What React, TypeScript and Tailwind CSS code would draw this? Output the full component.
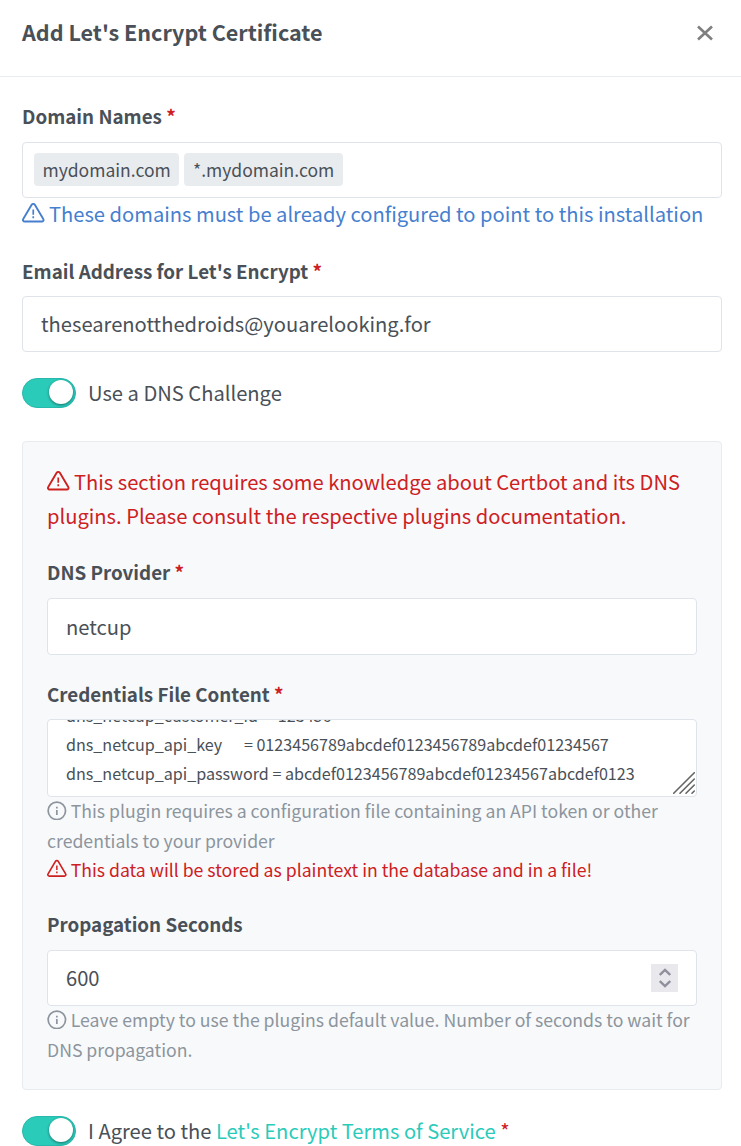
import type { ReactNode } from "react";

function AlertIcon({ className }: { className: string }) {
  return (
    <svg viewBox="0 0 24 24" fill="none" stroke="currentColor" strokeLinejoin="round" className={className}>
      <path
        strokeWidth="2"
        d="M10.29 2.9 1.3 18.2a1.7 1.7 0 0 0 1.5 2.6h18.4a1.7 1.7 0 0 0 1.5-2.6L13.71 2.9a2 2 0 0 0-3.42 0z"
      />
      <path strokeWidth="1.8" d="M12 8v5.5M12 15.3v2" />
    </svg>
  );
}

function InfoIcon({ className }: { className: string }) {
  return (
    <svg viewBox="0 0 24 24" fill="none" stroke="currentColor" className={className}>
      <circle cx="12" cy="12" r="10.6" strokeWidth="2.1" />
      <path strokeWidth="2.1" d="M12 17v-6M12 7v2" />
    </svg>
  );
}

function Label({ children, required = false }: { children: ReactNode; required?: boolean }) {
  return (
    <div className="h-[30px] whitespace-nowrap text-[18.8px] leading-[28px] font-bold">
      {children}
      {required && <span className="text-[#cd201f]"> *</span>}
    </div>
  );
}

function Field({ children, className = "h-14 px-[18px] text-[20.15px]" }: { children: ReactNode; className?: string }) {
  return (
    <div className={`flex items-center rounded-[4px] border border-[#dfe3ea] bg-white ${className}`}>
      {children}
    </div>
  );
}

function Toggle() {
  return (
    <span className="flex h-[30px] w-[54px] shrink-0 items-center justify-end rounded-full border border-[#28b9ac] bg-[#2bcbba] pr-[2px]">
      <span className="mb-[2px] size-[24px] rounded-full bg-white shadow-[0_1px_3px_rgba(0,0,0,0.45)]" />
    </span>
  );
}

export default function App() {
  return (
    <div className="h-[1146px] w-[741px] overflow-hidden bg-white font-['Noto_Sans_CJK_SC','Noto_Sans',sans-serif] text-[#495057]">
      <header className="flex h-[77px] items-start justify-between border-b border-[#e9ecef] pt-[16px] pr-[28px] pl-[22px]">
        <h1 className="text-[21.55px] leading-[32px] font-bold whitespace-nowrap">Add Let's Encrypt Certificate</h1>
        <svg viewBox="0 0 16 16" className="mt-[9px] size-[16px]" fill="none" stroke="#7f7f7f" strokeWidth="2.6">
          <path d="M1 1.5 15 14.5M15 1.5 1 14.5" />
        </svg>
      </header>

      <main className="pt-[25px] pr-[19px] pl-[22px]">
        <Label required>Domain Names</Label>
        <Field className="mt-[10px] h-14 gap-[5px] px-[11px] text-[17.5px]">
          <span className="mb-px h-[33px] w-[145px] rounded-[4px] bg-[#e9ecef] pl-[8.5px] leading-[33px]">
            mydomain.com
          </span>
          <span className="mb-px h-[33px] w-[159px] rounded-[4px] bg-[#e9ecef] pl-[9px] leading-[33px]">
            *.mydomain.com
          </span>
        </Field>
        <p className="h-[34px] text-[20.15px] leading-[31px] whitespace-nowrap text-[#467fcf]">
          <AlertIcon className="mr-[4.5px] mb-[6px] inline-block size-[22.5px]" />
          These domains must be already configured to point to this installation
        </p>

        <div className="mt-[25px]">
          <Label required>Email Address for Let's Encrypt</Label>
        </div>
        <Field className="mt-[9px] h-14 px-[18px] text-[20.15px]">thesearenotthedroids@youarelooking.for</Field>

        <div className="mt-[26px] flex h-[30px] items-center gap-[12px] text-[20.15px]">
          <Toggle />
          <span>Use a DNS Challenge</span>
        </div>

        <section className="mt-[33px] h-[649px] rounded-[4px] border border-[#e9ecef] bg-[#f8f9fb] px-[24px] pt-[23px]">
          <p className="h-[69px] text-[20.15px] leading-[34px] whitespace-nowrap text-[#cd201f]">
            <AlertIcon className="mr-[4.5px] mb-[6px] inline-block size-[22.5px]" />
            This section requires some knowledge about Certbot and its DNS
            <br />
            plugins. Please consult the respective plugins documentation.
          </p>

          <div className="mt-[24px]">
            <Label required>DNS Provider</Label>
          </div>
          <Field className="mt-[10px] h-[57px] px-[18px] pt-px text-[20.15px]">netcup</Field>

          <div className="mt-[25px]">
            <Label required>Credentials File Content</Label>
          </div>
          <div className="relative mt-[9px] flex h-[78px] flex-col justify-end overflow-hidden rounded-[4px] border border-[#dfe3ea] bg-white px-[18px] pb-[8px] text-[16.13px] leading-[29px] whitespace-pre">
            <div>dns_netcup_customer_id{"  "}= 123456</div>
            <div>dns_netcup_api_key{"      "}= 0123456789abcdef0123456789abcdef01234567</div>
            <div>dns_netcup_api_password = abcdef0123456789abcdef01234567abcdef0123</div>
            <svg
              viewBox="0 0 22 22"
              className="absolute right-px bottom-[2px] size-[22px]"
              stroke="#666"
              strokeWidth="1.6"
              strokeLinecap="round"
            >
              <path d="M.7 21.3 21.3.7M7 21.3 21.3 7M13 21.3 21.3 13M19 21.3 21.3 19" />
            </svg>
          </div>
          <p className="-mt-px h-[59px] text-[17.65px] leading-[29.5px] whitespace-nowrap text-[#8c959d]">
            <InfoIcon className="mr-[4px] mb-[5.5px] inline-block size-[19.7px]" />
            This plugin requires a configuration file containing an API token or other
            <br />
            credentials to your provider
          </p>
          <p className="h-[29.5px] text-[17.65px] leading-[29.5px] whitespace-nowrap text-[#cd201f]">
            <AlertIcon className="mr-[4px] mb-[6px] inline-block size-[19.7px]" />
            This data will be stored as plaintext in the database and in a file!
          </p>

          <div className="mt-[25.5px]">
            <Label>Propagation Seconds</Label>
          </div>
          <Field className="mt-[10px] h-14 justify-between px-[18px] text-[20.15px]">
            <span>600</span>
            <span className="flex h-[28px] w-[27px] items-center justify-center bg-[#e9e9ed]">
              <svg viewBox="0 0 12 20" className="h-[20px] w-[12px]" fill="none" stroke="#8f8f9d" strokeWidth="2.4">
                <path d="M.8 7 6 2l5.2 5M.8 13 6 18l5.2-5" />
              </svg>
            </span>
          </Field>
          <p className="-mt-px h-[59px] text-[17.65px] leading-[29.5px] whitespace-nowrap text-[#8c959d]">
            <InfoIcon className="mr-[4px] mb-[5.5px] inline-block size-[19.7px]" />
            Leave empty to use the plugins default value. Number of seconds to wait for
            <br />
            DNS propagation.
          </p>
        </section>

        <div className="mt-[26px] flex h-[30px] items-center gap-[12px] text-[20.15px] whitespace-nowrap">
          <Toggle />
          <span>
            I Agree to the <span className="text-[#2bcbba]">Let's Encrypt Terms of Service</span>
            <span className="text-[#cd201f]"> *</span>
          </span>
        </div>
      </main>
    </div>
  );
}
